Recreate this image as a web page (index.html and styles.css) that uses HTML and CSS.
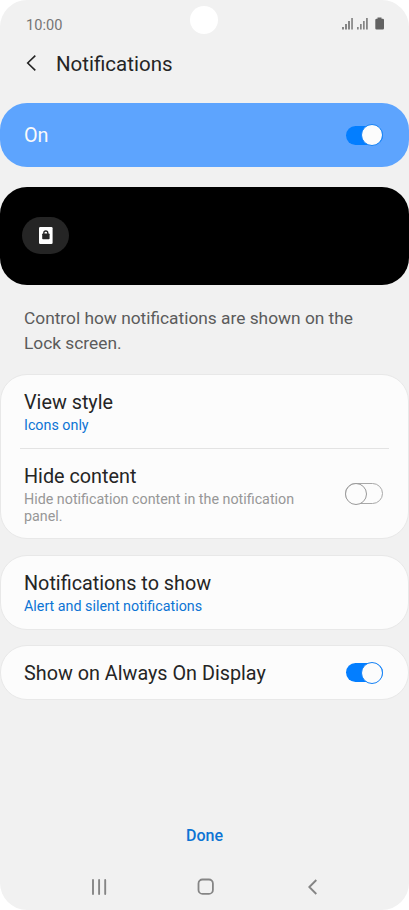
FILE: index.html
```html
<!DOCTYPE html>
<html lang="en">
<head>
<meta charset="utf-8">
<title>Notifications</title>
<link rel="stylesheet" href="styles.css">
</head>
<body>
<div class="phone">
  <div class="camera"></div>
  <div class="status">
    <span class="time">10:00</span>
    <svg class="status-icons" width="43" height="14" viewBox="0 0 43 14">
      <g fill="#858585">
        <path d="M0 10h2v2.500H0zM3 7h2v5.500H3zM6 4h2v8.500H6zM9.200 1h1.700v11.500H9.200z"/>
        <path d="M15 10h1.700v2.500H15zM18 7h1.700v5.500H18zM21 4h1.700v8.500H21zM24 1h1.800v11.500H24z"/>
      </g>
      <path fill="#626262" d="M35.500 .5h4v1.300h1.300q1.200 0 1.200 1.200v8.300q0 1.200-1.200 1.200h-6.300q-1.200 0-1.200-1.200V3q0-1.200 1.200-1.200h1z"/>
    </svg>
  </div>
  <header class="header">
    <svg class="back" width="12" height="18" viewBox="0 0 12 18"><path d="M9.300 1.700 1.700 9l7.600 7.300" fill="none" stroke="#252525" stroke-width="1.600"/></svg>
    <h1>Notifications</h1>
  </header>
  <main>
    <section class="master">
      <span class="label">On</span>
      <span class="switch on"><i class="track"></i><i class="thumb"></i></span>
    </section>
    <section class="preview">
      <div class="chip">
        <svg width="14" height="17" viewBox="0 0 14 17"><rect width="13.600" height="17" rx="1.200" fill="#fff"/><path d="M4.800 7V6a2 2 0 0 1 4 0v1" fill="none" stroke="#252525" stroke-width="1.300"/><rect x="3.200" y="6.500" width="7.400" height="5.700" rx=".8" fill="#252525"/></svg>
      </div>
    </section>
    <p class="info">Control how notifications are shown on the Lock screen.</p>
    <section class="card group">
      <div class="row view-style">
        <div class="text"><h2>View style</h2><p class="value">Icons only</p></div>
      </div>
      <div class="row hide-content">
        <div class="text"><h2>Hide content</h2><p class="desc">Hide notification content in the notification panel.</p></div>
        <span class="switch off"><i class="track"></i><i class="thumb"></i></span>
      </div>
    </section>
    <section class="card show-list">
      <div class="text"><h2>Notifications to show</h2><p class="value">Alert and silent notifications</p></div>
    </section>
    <section class="card always-on">
      <h2>Show on Always On Display</h2>
      <span class="switch on"><i class="track"></i><i class="thumb"></i></span>
    </section>
  </main>
  <footer class="done">Done</footer>
  <nav class="nav">
    <svg width="16" height="16" viewBox="0 0 16 16"><path d="M2 1v14M8.100 1v14M14.200 1v14" stroke="#858585" stroke-width="1.900" stroke-linecap="round"/></svg>
    <svg class="home" width="18" height="18" viewBox="0 0 18 18"><rect x="1.500" y="1.500" width="14.400" height="14.400" rx="4" fill="none" stroke="#858585" stroke-width="1.800"/></svg>
    <svg width="10" height="16" viewBox="0 0 10 16"><path d="M8.300 1 1.300 8l7 7" fill="none" stroke="#858585" stroke-width="1.900"/></svg>
  </nav>
</div>
</body>
</html>
```
FILE: styles.css
```css
* { box-sizing: border-box; margin: 0; padding: 0; }
body { background: #fff; font-family: Roboto, sans-serif; color: #252525; }
svg { display: block; }
.phone {
  position: relative;
  display: flex;
  flex-direction: column;
  width: 409px;
  height: 910px;
  background: #f1f1f1;
  border-radius: 27px;
  overflow: hidden;
}
.camera {
  position: absolute;
  left: 190px;
  top: 6px;
  width: 28px;
  height: 28px;
  border-radius: 50%;
  background: #fff;
}
.status { display: flex; justify-content: space-between; height: 40px; padding: 17px 24px 0 26px; }
.time { font-size: 14.600px; line-height: 16px; color: #757575; }
.header { display: flex; height: 63px; padding: 0 26px; gap: 18px; }
.back { margin-top: 14px; }
h1 { font-size: 20.500px; line-height: 24px; font-weight: 400; margin-top: 12px; }
h2 { font-size: 19.800px; line-height: 26px; font-weight: 400; }
.master {
  display: flex;
  align-items: center;
  justify-content: space-between;
  height: 64px;
  padding: 0 26px 0 24px;
  border-radius: 27px;
  background: #5da4fe;
  color: #fafafa;
}
.label { font-size: 19.800px; line-height: 24px; padding-top: 2px; }
.preview {
  display: flex;
  align-items: center;
  height: 98px;
  margin-top: 20px;
  padding: 0 22px 1px;
  border-radius: 27px;
  background: #000;
}
.chip { display: flex; align-items: center; justify-content: center; width: 47px; height: 37px; border-radius: 19px; background: #252525; }
.info { margin: 21px 24px 18px; font-size: 17.320px; line-height: 25px; color: #5b5b5b; }
.card { border: 1px solid #e8e8e8; border-radius: 27px; background: #fcfcfc; margin-bottom: 16px; }
.row { display: flex; align-items: center; justify-content: space-between; }
.view-style { height: 74px; margin: 0 19px; padding: 0 4px; border-bottom: 1px solid #e3e3e3; }
.hide-content { height: 90px; padding: 0 25px 0 23px; }
.value { font-size: 14.300px; line-height: 17px; margin-top: 1px; color: #0c74d4; }
.desc { font-size: 14.300px; line-height: 17px; margin-top: 1px; width: 285px; color: #979797; }
.group { height: 165px; }
.show-list { display: flex; align-items: center; height: 75px; padding: 0 23px; margin-bottom: 15px; }
.always-on { display: flex; align-items: center; justify-content: space-between; height: 55px; padding: 0 25px 0 23px; }
.always-on h2 { padding-top: 2px; }
.switch { display: grid; align-items: center; width: 37px; height: 22px; }
.track, .thumb { grid-area: 1 / 1; display: block; }
.track { height: 19px; border-radius: 10px; }
.thumb { width: 22px; height: 22px; border-radius: 50%; background: #fcfcfc; }
.on .track { background: #037eff; }
.on .thumb { justify-self: end; border: 1px solid #1682f5; }
.off { width: 38px; margin-bottom: 1px; }
.off .track { height: 21px; border: 1px solid #a8a8a8; border-radius: 11px; }
.off .thumb { border: 1px solid #999; }
.done { margin-top: auto; height: 39px; text-align: center; font-size: 16px; line-height: 20px; font-weight: 500; color: #0c74d4; }
.nav { display: grid; grid-template-columns: 106px 1fr auto; align-items: center; height: 45px; padding: 0 91px 1px; }
```
